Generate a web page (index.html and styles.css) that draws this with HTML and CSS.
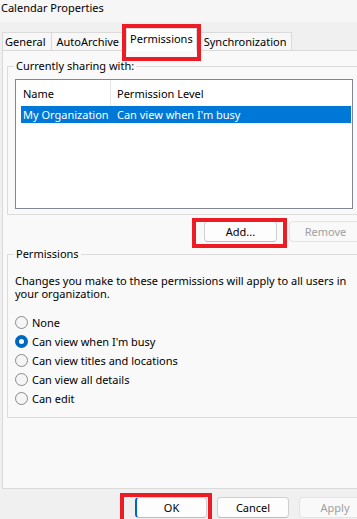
FILE: index.html
```html
<!DOCTYPE html>
<html lang="en">
<head>
    <meta charset="UTF-8">
    <meta name="viewport" content="width=device-width, initial-scale=1.0">
    <title>Calendar Properties</title>
    <link rel="stylesheet" href="styles.css">
</head>
<body>

<div class="dialog">
    <div class="titlebar">Calendar Properties</div>

    <div class="tabs">
        <div class="tab">General</div>
        <div class="tab">AutoArchive</div>
        <div class="tab selected marked">Permissions</div>
        <div class="tab">Synchronization</div>
    </div>

    <div class="panel">
        <fieldset class="group">
            <legend>Currently sharing with:</legend>
            <div class="listview">
                <div class="list-head">
                    <div class="col-name">Name</div>
                    <div class="col-level">Permission Level</div>
                </div>
                <div class="list-row active">
                    <div class="col-name">My Organization</div>
                    <div class="col-level">Can view when I'm busy</div>
                </div>
            </div>
        </fieldset>

        <div class="button-row">
            <button class="btn marked">Add...</button>
            <button class="btn" disabled>Remove</button>
        </div>

        <fieldset class="group perms">
            <legend>Permissions</legend>
            <p class="note">Changes you make to these permissions will apply to all users in your organization.</p>
            <div class="options">
                <label class="option"><span class="radio"></span>None</label>
                <label class="option"><span class="radio checked"></span>Can view when I'm busy</label>
                <label class="option"><span class="radio"></span>Can view titles and locations</label>
                <label class="option"><span class="radio"></span>Can view all details</label>
                <label class="option"><span class="radio"></span>Can edit</label>
            </div>
        </fieldset>
    </div>

    <div class="footer">
        <button class="btn default marked">OK</button>
        <button class="btn">Cancel</button>
        <button class="btn" disabled>Apply</button>
    </div>
</div>

</body>
</html>
```

FILE: styles.css
```css
body {
    margin: 0;
    font-family: "Noto Sans", "Open Sans", sans-serif;
    font-size: 11px;
    color: #000;
    background-color: #f0f0f0;
}
.dialog {
    width: 357px;
    height: 519px;
    overflow: hidden;
    background-color: #f0f0f0;
}
.titlebar {
    height: 22px;
    line-height: 16px;
    padding-left: 1px;
    background-color: #f6f6f6;
}
.tabs {
    display: flex;
    align-items: flex-end;
    height: 28px;
    padding-left: 2px;
}
.tab {
    height: 17px;
    line-height: 17px;
    padding: 0 5px 0 2px;
    border: 1px solid #dadada;
    border-bottom: none;
    background-color: #f7f7f7;
    white-space: nowrap;
}
.tab + .tab {
    border-left: none;
    padding-left: 5px;
}
.tab.selected {
    position: relative;
    height: 22px;
    line-height: 20px;
    margin: 0 3px -1px 1px;
    padding: 0 3px;
    border-left: 1px solid #dadada;
    background-color: #fff;
    z-index: 1;
}
.tab.selected + .tab {
    border-left: 1px solid #dadada;
    padding-left: 3px;
}
.panel {
    width: 366px;
    height: 437px;
    margin-left: 2px;
    border: 1px solid #dadada;
    background-color: #f9f9f9;
}
.group {
    margin: 7px 6px 0 4px;
    padding: 5px 9px 5px 7px;
    border: 1px solid #dcdcdc;
    min-width: 0;
}
.group legend {
    padding: 0 2px;
    margin-left: -1px;
    line-height: 16px;
}
.listview {
    height: 128px;
    border: 1px solid #82878f;
    background-color: #fff;
}
.list-head,
.list-row {
    display: flex;
    white-space: nowrap;
}
.list-head {
    height: 26px;
    line-height: 27px;
}
.list-row {
    height: 17px;
    line-height: 17px;
    margin: 0 1px 0 5px;
}
.list-row.active {
    background-color: #0078d7;
    color: #fff;
}
.col-name {
    width: 95px;
    padding-left: 7px;
    box-sizing: border-box;
}
.list-row .col-name {
    width: 90px;
    padding-left: 2px;
}
.list-head .col-name {
    border-right: 1px solid #e5e5e5;
}
.col-level {
    padding-left: 6px;
}
.button-row {
    display: flex;
    justify-content: flex-end;
    gap: 12px;
    margin-top: 6px;
    padding-right: 7px;
}
.btn {
    position: relative;
    width: 73px;
    height: 21px;
    padding: 0;
    font-family: inherit;
    font-size: 11px;
    color: #000;
    background-color: #fdfdfd;
    border: 1px solid #d0d0d0;
    border-bottom-color: #bdbdbd;
    border-radius: 4px;
}
.btn:disabled {
    color: #a0a0a0;
    background-color: #f9f9f9;
    border-color: #e3e3e3;
}
.btn.default {
    border-left: 2px solid #0067c0;
}
.marked::after {
    content: "";
    position: absolute;
    border: 4px solid #ed1c24;
    pointer-events: none;
}
.tab.marked::after {
    top: -5px;
    left: -5px;
    right: -5px;
    bottom: -10px;
}
.button-row .marked::after {
    top: -4px;
    left: -13px;
    right: -11px;
    bottom: -7px;
}
.footer .marked::after {
    top: -5px;
    left: -17px;
    right: -6px;
    bottom: -6px;
}
.perms {
    margin-top: 4px;
    padding-bottom: 9px;
}
.note {
    margin: 7px 0 0 0;
    line-height: 13px;
}
.options {
    margin-top: 13px;
}
.option {
    display: flex;
    align-items: center;
    height: 19px;
}
.radio {
    width: 11px;
    height: 11px;
    margin-right: 4px;
    border: 1px solid #8a8a8a;
    border-radius: 50%;
    background-color: #f5f5f5;
}
.radio.checked {
    width: 5px;
    height: 5px;
    border: 4px solid #0067c0;
    background-color: #fff;
}
.footer {
    display: flex;
    justify-content: flex-end;
    gap: 10px;
    width: 380px;
    box-sizing: border-box;
    padding: 8px 9px 0 0;
}
.footer .btn {
    width: 72px;
}
```
